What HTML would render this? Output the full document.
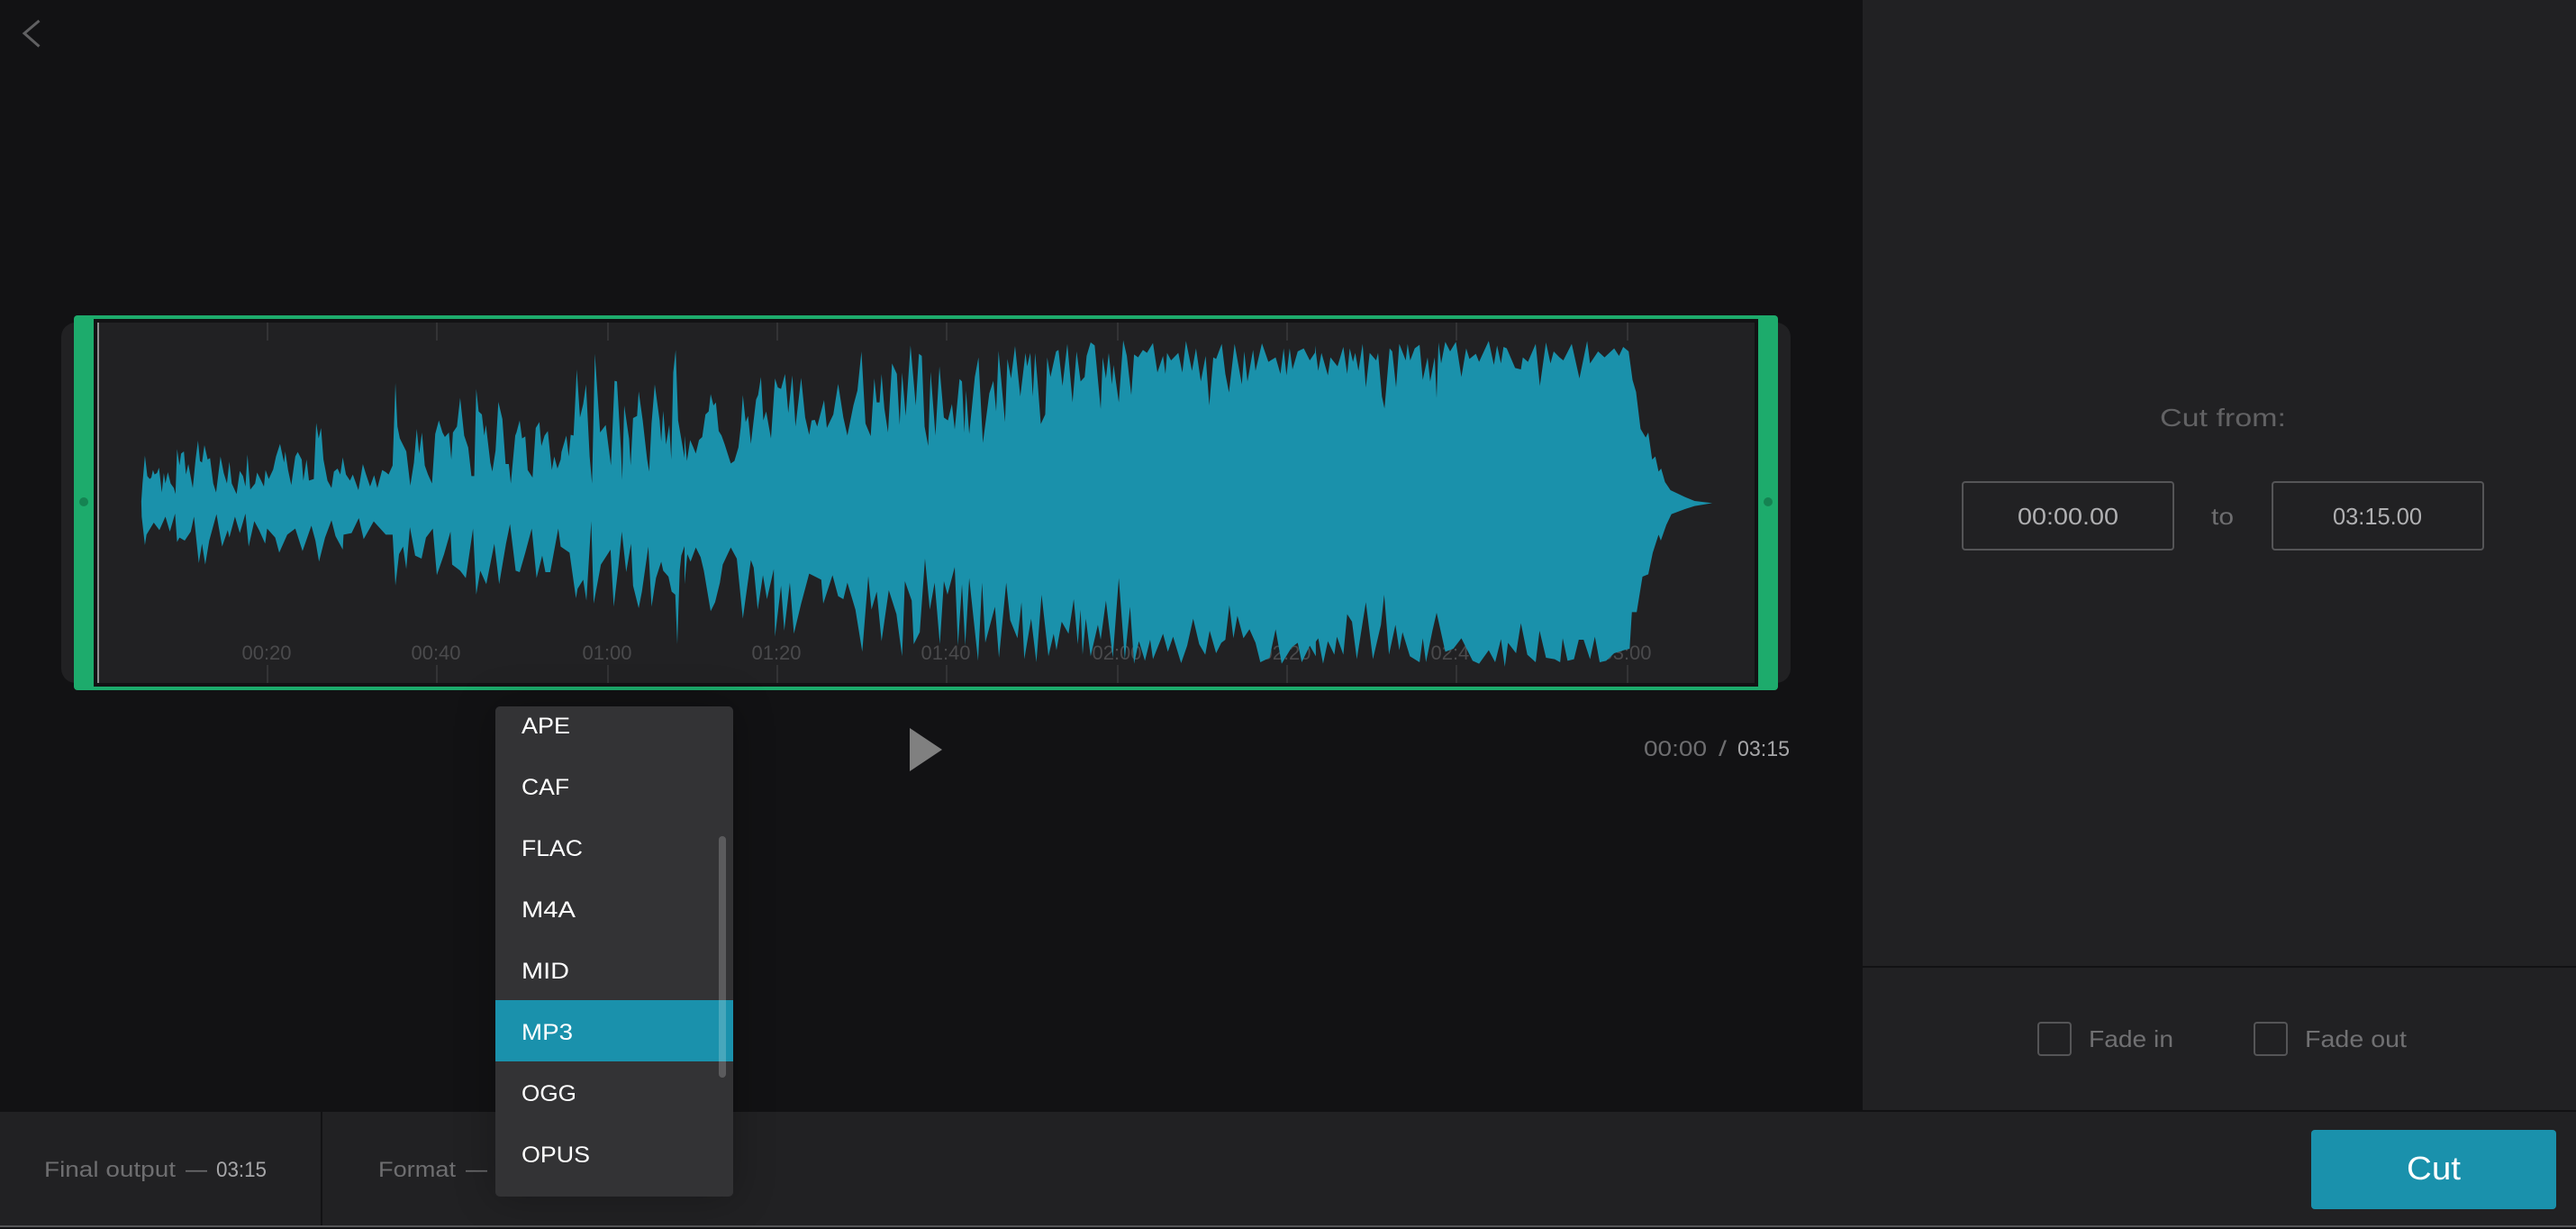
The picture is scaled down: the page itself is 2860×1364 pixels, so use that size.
<!DOCTYPE html>
<html lang="en">
<head>
<meta charset="utf-8">
<title>Cut audio</title>
<style>
html,body{margin:0;padding:0;background:#121214;width:2860px;height:1364px;overflow:hidden}
svg{display:block;position:absolute;left:0;top:0}
text{font-family:"Liberation Sans",sans-serif}
#menu{position:absolute;left:550px;top:784px;width:264px;height:544px;border-radius:5px;box-shadow:0 0 45px rgba(0,0,0,.28)}
</style>
</head>
<body>
<svg width="2860" height="1364" viewBox="0 0 2860 1364" xmlns="http://www.w3.org/2000/svg">
<rect width="2860" height="1364" fill="#121214"/>
<!-- sidebar -->
<rect x="2068" y="0" width="792" height="1072" fill="#212123"/>
<rect x="2068" y="1074" width="792" height="158" fill="#212123"/>
<!-- bottom bar -->
<rect x="0" y="1234" width="2860" height="126" fill="#212123"/>
<rect x="0" y="1360" width="2860" height="2" fill="#555557"/>
<rect x="356" y="1234" width="2" height="126" fill="#121214"/>
<!-- back -->
<polyline points="43.5,23 27,37 43.5,51.5" fill="none" stroke="#606062" stroke-width="3"/>
<!-- track -->
<rect x="68" y="358" width="1920" height="400" rx="16" fill="#212123"/>
<rect x="82" y="350" width="1892" height="416" rx="4" fill="#1dab6c"/>
<rect x="104" y="354" width="1848" height="408" fill="#121214"/>
<rect x="108" y="358" width="1840" height="400" fill="#212123"/>
<circle cx="93" cy="557" r="5" fill="#158352"/>
<circle cx="1963" cy="557" r="5" fill="#158352"/>
<g fill="#333335">
<rect x="296" y="358" width="2" height="20"/><rect x="296" y="738" width="2" height="20"/>
<rect x="484" y="358" width="2" height="20"/><rect x="484" y="738" width="2" height="20"/>
<rect x="674" y="358" width="2" height="20"/><rect x="674" y="738" width="2" height="20"/>
<rect x="862" y="358" width="2" height="20"/><rect x="862" y="738" width="2" height="20"/>
<rect x="1050" y="358" width="2" height="20"/><rect x="1050" y="738" width="2" height="20"/>
<rect x="1240" y="358" width="2" height="20"/><rect x="1240" y="738" width="2" height="20"/>
<rect x="1428" y="358" width="2" height="20"/><rect x="1428" y="738" width="2" height="20"/>
<rect x="1616" y="358" width="2" height="20"/><rect x="1616" y="738" width="2" height="20"/>
<rect x="1806" y="358" width="2" height="20"/><rect x="1806" y="738" width="2" height="20"/>
</g>
<g fill="#4a4a4c" font-size="22" text-anchor="middle">
<text x="296" y="732">00:20</text>
<text x="484" y="732">00:40</text>
<text x="674" y="732">01:00</text>
<text x="862" y="732">01:20</text>
<text x="1050" y="732">01:40</text>
<text x="1240" y="732">02:00</text>
<text x="1428" y="732">02:20</text>
<text x="1616" y="732">02:40</text>
<text x="1806" y="732">03:00</text>
</g>
<!-- waveform -->
<g fill="#1a91ab">
<polygon transform="translate(60 340) scale(.446429 .333333)" points="217,650 220,590 226,497 232,565 238,575 242,570 246,545 250,560 256,555 261,537 268,620 273,555 277,590 283,552 290,590 298,605 302,625 306,475 312,530 316,490 323,483 328,560 334,525 345,605 352,510 358,447 363,515 368,520 374,462 382,510 388,505 396,590 403,620 414,500 422,555 430,590 436,517 442,590 454,625 462,548 470,565 476,600 481,493 488,610 500,590 505,553 515,580 522,600 526,545 534,575 545,543 552,500 562,458 572,520 575,483 582,545 590,595 600,500 606,485 616,510 620,580 628,510 634,580 646,575 652,388 658,440 664,405 670,510 680,580 690,605 696,550 705,540 712,560 718,503 726,560 736,580 743,560 757,612 768,525 776,560 786,600 796,562 804,605 816,545 825,552 832,560 842,530 849,255 854,400 860,440 876,483 886,597 895,520 902,408 908,490 915,420 922,530 930,560 940,590 948,425 957,380 966,420 972,435 982,420 988,510 992,420 1002,400 1010,305 1020,430 1030,470 1038,565 1045,565 1050,275 1056,350 1064,360 1070,430 1074,395 1085,520 1090,550 1098,480 1105,318 1115,375 1123,525 1131,525 1136,590 1147,430 1150,420 1158,380 1164,440 1172,433 1178,545 1190,570 1198,405 1207,385 1212,465 1220,430 1228,415 1238,545 1244,500 1252,540 1260,510 1262,485 1274,430 1280,500 1285,428 1292,430 1300,210 1308,370 1316,325 1323,260 1332,500 1338,590 1345,158 1358,420 1372,395 1385,530 1394,248 1400,250 1410,480 1413,578 1418,330 1430,440 1434,530 1440,372 1450,365 1454,283 1464,380 1475,510 1480,550 1486,390 1494,260 1506,380 1510,450 1515,348 1522,460 1530,395 1535,510 1540,220 1546,145 1552,380 1570,520 1570,790 1560,830 1556,880 1550,1125 1545,960 1536,950 1528,900 1515,880 1510,850 1497,905 1486,1000 1478,800 1462,950 1454,1005 1440,930 1435,790 1423,885 1412,750 1404,860 1392,1000 1384,810 1360,860 1342,990 1336,715 1324,980 1316,910 1302,940 1298,972 1282,820 1260,800 1254,740 1234,885 1222,885 1214,830 1200,905 1188,740 1172,820 1158,885 1148,880 1134,725 1124,790 1107,925 1095,790 1075,925 1060,880 1050,960 1042,740 1024,905 1010,880 990,860 986,750 970,825 952,895 942,740 925,770 914,840 898,830 885,735 876,875 868,800 858,825 849,930 842,760 825,760 795,716 770,775 758,705 740,755 720,760 718,810 700,765 690,712 674,770 659,850 650,780 640,730 618,815 600,740 580,760 560,820 550,770 530,740 525,790 510,745 498,715 484,800 476,690 462,755 450,700 436,770 432,745 418,800 404,692 386,780 376,860 368,790 360,855 348,700 340,750 325,780 312,770 306,785 301,690 288,750 277,700 262,745 248,720 230,760 226,795 218,700"/>
<polygon transform="translate(760 340) scale(.446429 .333333)" points="0,430 6,515 14,445 22,470 28,490 36,445 44,435 52,360 60,350 65,292 72,330 78,320 85,415 92,430 100,460 115,523 124,515 134,470 140,400 145,295 152,385 158,365 165,458 178,310 183,295 190,235 196,380 203,350 215,440 225,240 232,270 240,275 250,225 258,355 268,230 276,400 290,238 300,370 310,428 316,380 324,378 330,400 347,312 354,405 370,360 382,258 395,370 405,430 420,330 430,280 440,150 450,390 463,432 472,240 478,320 485,320 490,225 497,340 506,420 516,190 528,225 535,395 541,220 550,365 562,130 575,330 583,158 590,165 597,400 606,465 612,218 624,430 634,200 645,370 655,380 665,325 672,410 684,242 690,250 696,420 700,280 708,425 722,235 731,170 742,455 758,290 768,248 775,350 781,148 797,385 803,175 812,240 822,132 835,300 848,155 852,200 860,155 866,300 872,155 878,250 886,392 897,360 902,170 910,235 924,150 930,145 940,265 952,125 965,320 975,150 985,250 995,235 1000,165 1010,120 1020,130 1035,342 1040,170 1048,240 1055,155 1063,260 1067,195 1080,320 1091,113 1100,165 1111,295 1118,160 1128,170 1140,145 1150,155 1165,122 1176,220 1190,165 1196,225 1200,155 1210,180 1228,155 1238,220 1247,115 1262,215 1272,140 1284,250 1296,165 1305,330 1315,170 1322,175 1336,125 1345,225 1354,287 1368,125 1386,260 1392,150 1400,250 1414,145 1420,215 1436,123 1452,185 1470,170 1482,225 1490,140 1497,230 1505,140 1512,210 1525,150 1540,140 1555,180 1570,150 1570,1165 1555,1130 1535,1185 1525,1120 1510,1135 1485,1190 1470,1075 1455,1170 1432,1185 1420,1120 1405,1075 1390,1105 1375,1030 1365,1105 1355,995 1345,1110 1335,1120 1322,1155 1306,1080 1295,1160 1280,1125 1265,1040 1250,1130 1235,1188 1215,1100 1202,1150 1190,1090 1165,1175 1158,1110 1145,1180 1130,1115 1118,1190 1108,1000 1095,1175 1080,905 1065,1170 1048,980 1035,1110 1028,1060 1010,1165 998,1040 990,1160 985,1010 978,1125 968,975 955,1090 938,1050 925,1145 918,1090 905,1165 888,960 875,1185 862,1040 845,1175 838,985 828,1105 810,1045 800,920 782,1170 772,1000 748,1120 740,920 730,1180 722,1080 708,905 698,1130 690,925 680,1130 672,868 654,960 645,915 635,1125 622,920 610,1010 598,840 585,1085 570,1125 565,980 548,915 541,1165 527,1025 508,945 490,1115 478,950 465,1010 457,898 442,1150 425,1010 405,920 395,975 382,965 368,895 345,990 340,910 310,890 290,990 272,1090 262,920 248,1080 240,930 225,1100 222,875 205,975 195,895 182,1010 172,870 165,845 145,1040 130,840 115,803 95,860 88,920 76,985 65,1015 48,880 40,835 28,803 15,850 7,825 0,925"/>
<polygon transform="translate(1460 340) scale(.357143 .333333)" points="0,130 10,215 20,155 40,230 48,170 70,200 88,135 100,225 108,140 118,185 125,155 135,215 148,125 158,270 170,155 190,180 196,155 208,300 216,340 232,140 240,150 252,270 262,125 282,180 288,125 296,180 310,140 325,128 335,245 350,170 358,250 372,170 378,305 384,120 392,190 405,118 420,150 438,118 455,235 470,140 480,175 500,158 510,185 540,115 556,195 566,130 578,190 586,135 596,140 622,205 640,210 646,170 662,185 686,125 699,265 718,120 732,190 742,150 760,170 772,180 798,125 822,240 846,115 855,190 880,150 900,170 930,140 945,165 958,135 975,150 987,245 998,285 1012,408 1028,437 1036,420 1048,510 1058,500 1068,550 1076,540 1088,585 1105,612 1150,635 1180,648 1235,655 1180,665 1150,675 1108,692 1092,728 1075,780 1068,760 1050,820 1036,892 1018,900 1000,1018 985,1018 978,1140 960,1145 930,1155 905,1180 885,1185 870,1100 855,1175 835,1110 820,1110 805,1175 785,1180 770,1105 762,1185 745,1175 718,1170 698,1080 686,1185 660,1160 640,1055 625,1155 600,1120 590,1200 578,1108 560,1185 540,1145 510,1190 490,1180 455,1105 430,1140 405,1150 378,1020 365,1080 345,1185 335,1105 325,1185 295,1165 272,1085 262,1145 250,1060 230,1160 215,960 205,1060 180,1175 158,985 130,1175 115,1050 100,1025 88,1160 68,1100 60,1160 40,1115 25,1190 10,1105 0,1120"/>
</g>
<rect x="108" y="358" width="2" height="400" fill="#8c8c8e"/>
<!-- player controls -->
<polygon points="1010,808 1046,832 1010,856" fill="#808080"/>
<g font-size="24">
<text x="1825" y="839" fill="#6e6e70" textLength="70" lengthAdjust="spacingAndGlyphs">00:00</text>
<text x="1908" y="839" fill="#6e6e70" textLength="9" lengthAdjust="spacingAndGlyphs">/</text>
<text x="1929" y="839" fill="#a6a6a8" textLength="58" lengthAdjust="spacingAndGlyphs">03:15</text>
</g>
<!-- cut from -->
<text x="2398" y="473" font-size="28" fill="#626264" textLength="140" lengthAdjust="spacingAndGlyphs">Cut from:</text>
<rect x="2179" y="535" width="234" height="75" rx="3" fill="none" stroke="#555557" stroke-width="2"/>
<rect x="2523" y="535" width="234" height="75" rx="3" fill="none" stroke="#555557" stroke-width="2"/>
<g font-size="26">
<text x="2240" y="582" fill="#b0b0b2" textLength="112" lengthAdjust="spacingAndGlyphs">00:00.00</text>
<text x="2455" y="582" fill="#6e6e70" textLength="25" lengthAdjust="spacingAndGlyphs">to</text>
<text x="2590" y="582" fill="#b0b0b2" textLength="99" lengthAdjust="spacingAndGlyphs">03:15.00</text>
<!-- fades -->
<text x="2319" y="1162" fill="#707072" textLength="94" lengthAdjust="spacingAndGlyphs">Fade in</text>
<text x="2559" y="1162" fill="#707072" textLength="113" lengthAdjust="spacingAndGlyphs">Fade out</text>
</g>
<rect x="2263" y="1135" width="36" height="36" rx="3" fill="none" stroke="#555557" stroke-width="2"/>
<rect x="2503" y="1135" width="36" height="36" rx="3" fill="none" stroke="#555557" stroke-width="2"/>
<!-- bottom text -->
<g font-size="24">
<text x="49" y="1306" fill="#6e6e70" textLength="146" lengthAdjust="spacingAndGlyphs">Final output</text>
<text x="206" y="1306" fill="#6e6e70" textLength="24" lengthAdjust="spacingAndGlyphs">—</text>
<text x="240" y="1306" fill="#a6a6a8" textLength="56" lengthAdjust="spacingAndGlyphs">03:15</text>
<text x="420" y="1306" fill="#6e6e70" textLength="86" lengthAdjust="spacingAndGlyphs">Format</text>
<text x="517" y="1306" fill="#6e6e70" textLength="24" lengthAdjust="spacingAndGlyphs">—</text>
</g>
<!-- cut button -->
<rect x="2566" y="1254" width="272" height="88" rx="4" fill="#1a91ac"/>
<text x="2672" y="1309" font-size="36" fill="#ffffff" textLength="60" lengthAdjust="spacingAndGlyphs">Cut</text>
</svg>
<div id="menu"></div>
<svg width="2860" height="1364" viewBox="0 0 2860 1364" xmlns="http://www.w3.org/2000/svg">
<!-- dropdown -->
<rect x="550" y="784" width="264" height="544" rx="5" fill="#333335"/>
<rect x="550" y="1110" width="264" height="68" fill="#1a91ac"/>
<g font-size="25" fill="#ffffff">
<text x="579" y="814" textLength="54" lengthAdjust="spacingAndGlyphs">APE</text>
<text x="579" y="882" textLength="53" lengthAdjust="spacingAndGlyphs">CAF</text>
<text x="579" y="950" textLength="68" lengthAdjust="spacingAndGlyphs">FLAC</text>
<text x="579" y="1018" textLength="60" lengthAdjust="spacingAndGlyphs">M4A</text>
<text x="579" y="1086" textLength="53" lengthAdjust="spacingAndGlyphs">MID</text>
<text x="579" y="1154" textLength="57" lengthAdjust="spacingAndGlyphs">MP3</text>
<text x="579" y="1222" textLength="61" lengthAdjust="spacingAndGlyphs">OGG</text>
<text x="579" y="1290" textLength="76" lengthAdjust="spacingAndGlyphs">OPUS</text>
</g>
<rect x="798" y="928" width="8" height="268" rx="4" fill="#ffffff" fill-opacity=".2"/>
</svg>
</body>
</html>
